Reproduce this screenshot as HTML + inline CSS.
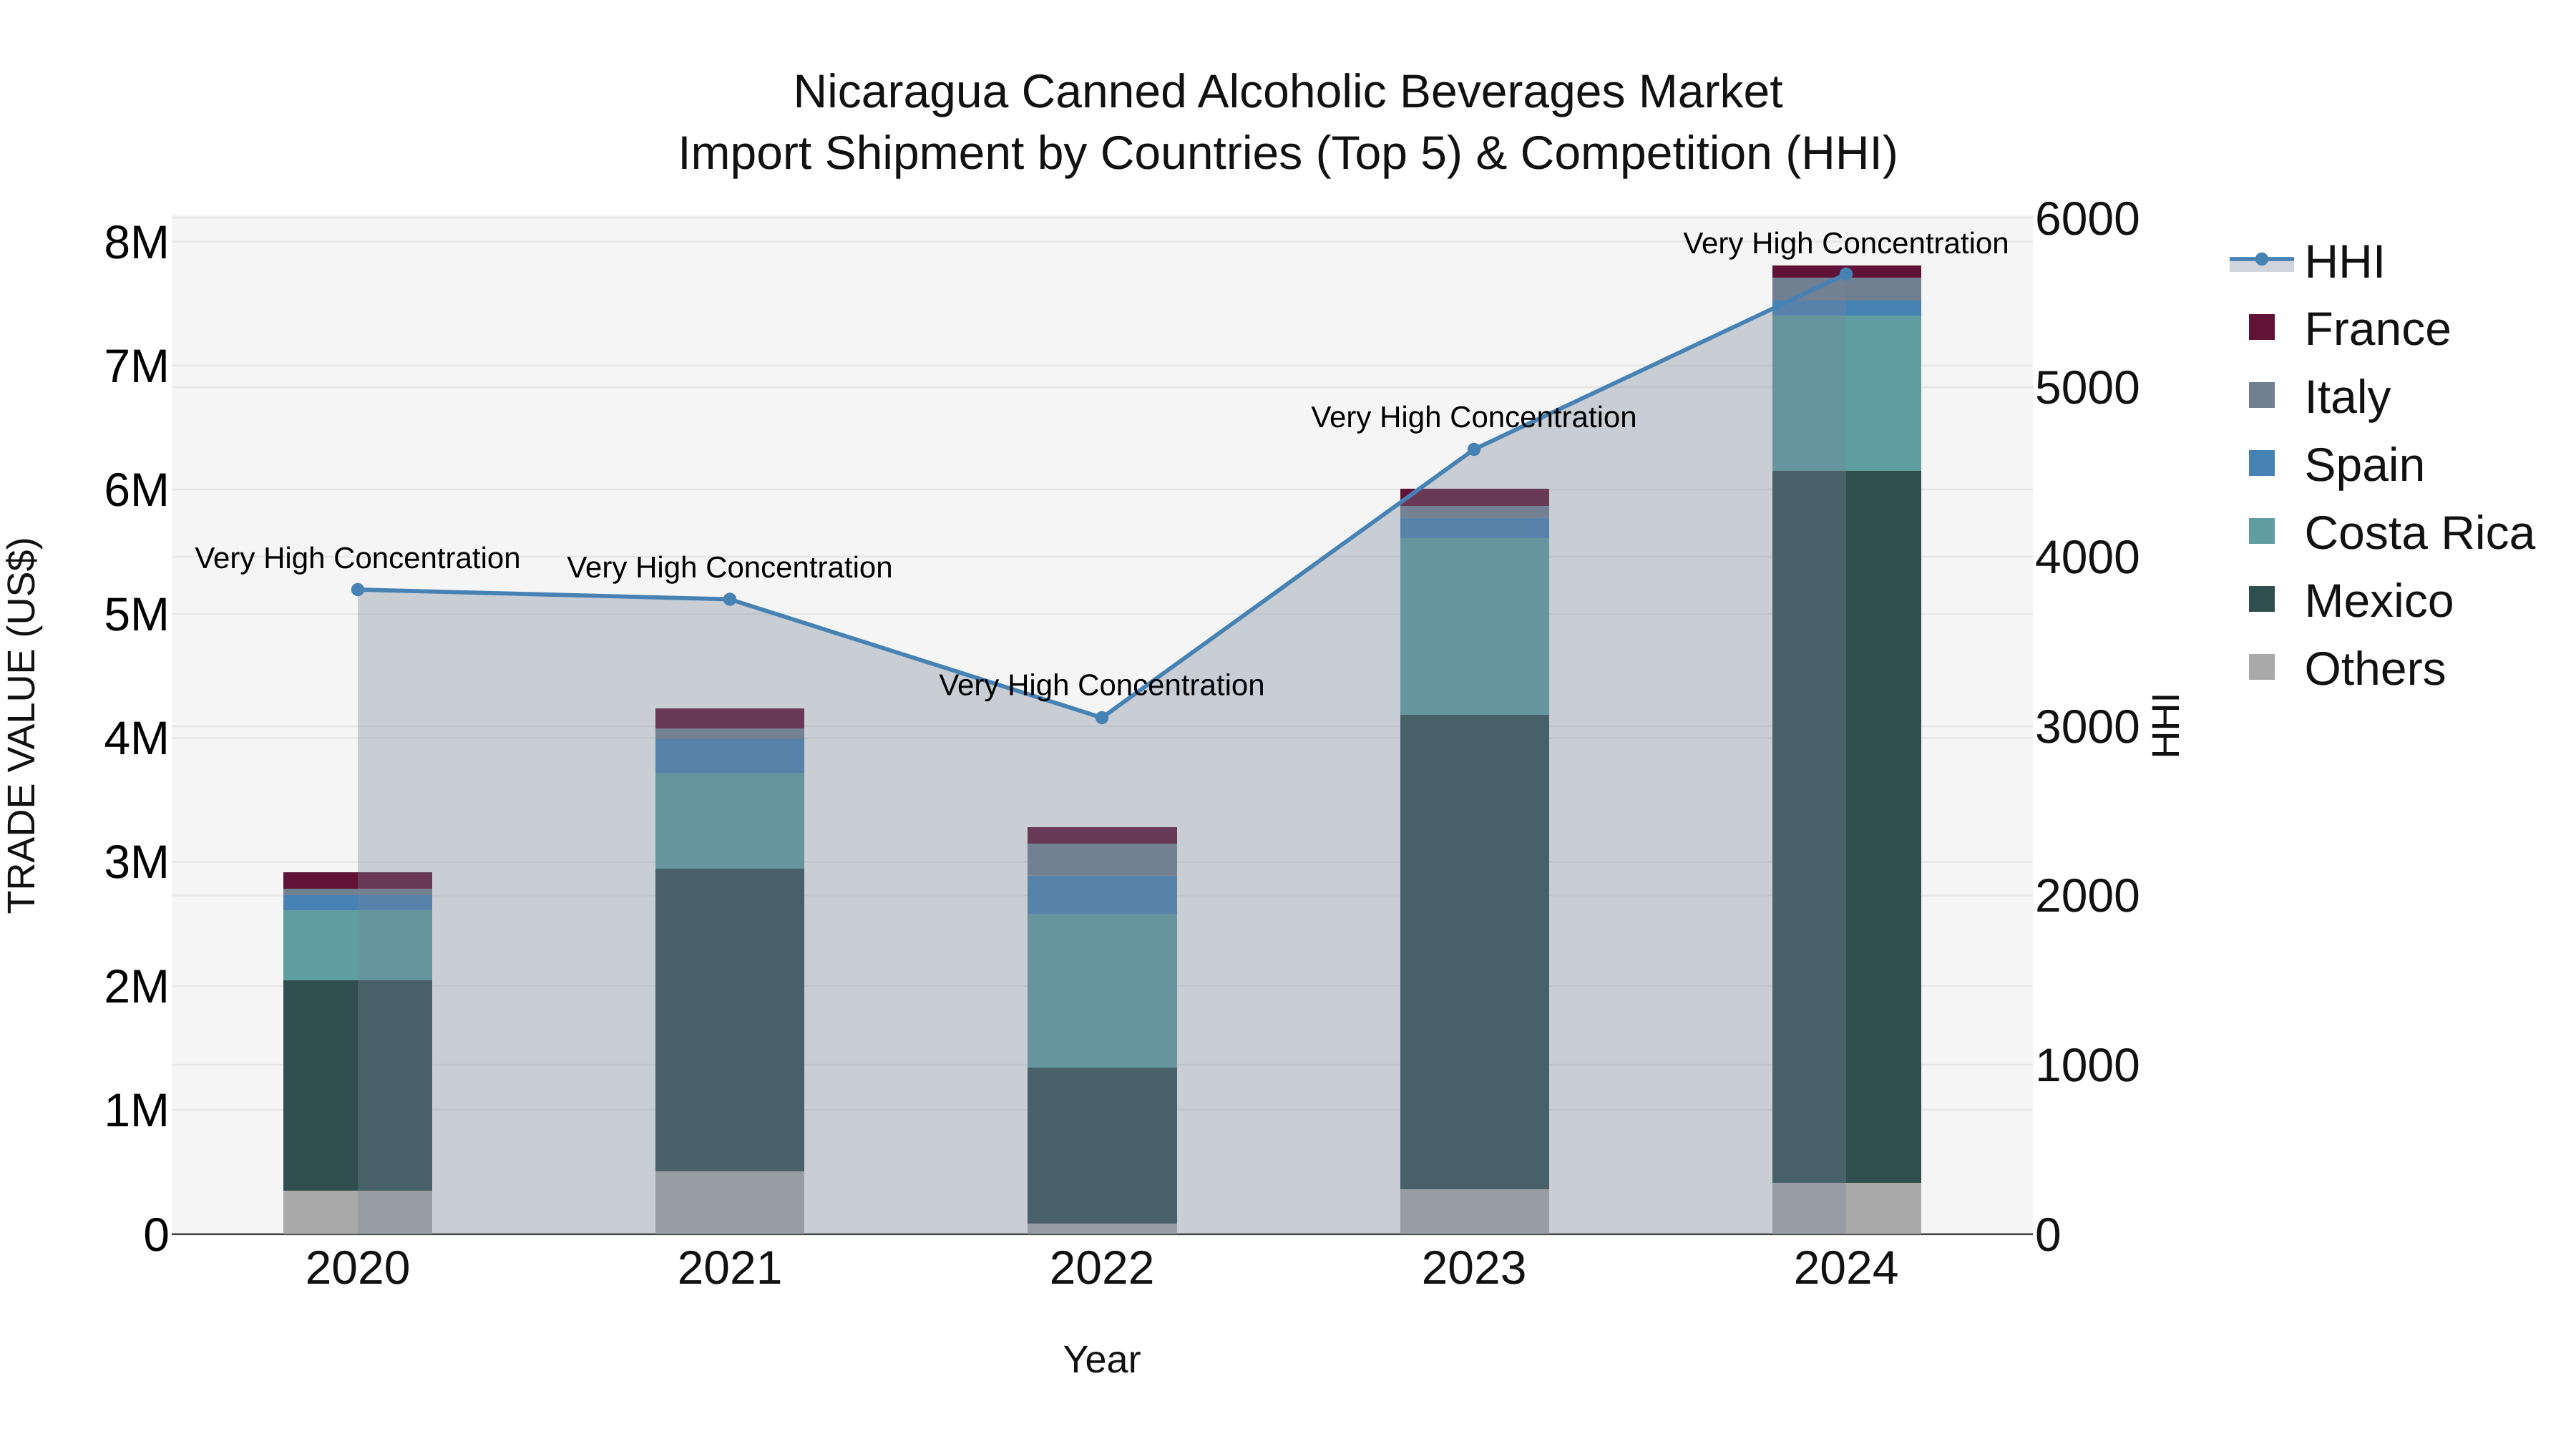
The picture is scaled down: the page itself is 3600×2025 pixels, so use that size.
<!DOCTYPE html>
<html>
<head>
<meta charset="utf-8">
<style>
html,body{margin:0;padding:0;background:#fff;width:3600px;height:2025px;overflow:hidden}
svg{display:block}
text{font-family:"Liberation Sans",Arial,sans-serif;text-rendering:geometricPrecision}
</style>
</head>
<body>
<svg width="3600" height="2025" viewBox="0 0 3600 2025" xmlns="http://www.w3.org/2000/svg">
<rect width="3600" height="2025" fill="#fff"/>
<rect x="240" y="300" width="2601" height="1424.5" fill="#f5f5f5"/>
<g stroke="#e6e6e6" stroke-width="2.6" fill="none">
<path d="M240 304H2841M240 337.5H2841M240 511H2841M240 541H2841M240 684H2841M240 778H2841M240 858H2841M240 1015H2841M240 1031.5H2841M240 1204.5H2841M240 1251.5H2841M240 1378H2841M240 1488H2841M240 1551H2841"/>
</g>
<path d="M240 1724.8H2841" stroke="#444" stroke-width="2.6" fill="none"/>
<!-- 2020 -->
<rect x="396" y="1664" width="208" height="60.5" fill="#a9a9a9"/>
<rect x="396" y="1370" width="208" height="294" fill="#2f4f4f"/>
<rect x="396" y="1272" width="208" height="98" fill="#5f9ea0"/>
<rect x="396" y="1251" width="208" height="21" fill="#4682b4"/>
<rect x="396" y="1242" width="208" height="9" fill="#708090"/>
<rect x="396" y="1219" width="208" height="23" fill="#601336"/>
<!-- 2021 -->
<rect x="916" y="1637" width="208" height="87.5" fill="#a9a9a9"/>
<rect x="916" y="1214" width="208" height="423" fill="#2f4f4f"/>
<rect x="916" y="1080" width="208" height="134" fill="#5f9ea0"/>
<rect x="916" y="1033" width="208" height="47" fill="#4682b4"/>
<rect x="916" y="1018" width="208" height="15" fill="#708090"/>
<rect x="916" y="990" width="208" height="28" fill="#601336"/>
<!-- 2022 -->
<rect x="1436" y="1710" width="209" height="14.5" fill="#a9a9a9"/>
<rect x="1436" y="1492" width="209" height="218" fill="#2f4f4f"/>
<rect x="1436" y="1277.7" width="209" height="214.3" fill="#5f9ea0"/>
<rect x="1436" y="1223.7" width="209" height="54" fill="#4682b4"/>
<rect x="1436" y="1179" width="209" height="44.7" fill="#708090"/>
<rect x="1436" y="1156" width="209" height="23" fill="#601336"/>
<!-- 2023 -->
<rect x="1957" y="1662" width="208" height="62.5" fill="#a9a9a9"/>
<rect x="1957" y="999" width="208" height="663" fill="#2f4f4f"/>
<rect x="1957" y="752" width="208" height="247" fill="#5f9ea0"/>
<rect x="1957" y="723.7" width="208" height="28.3" fill="#4682b4"/>
<rect x="1957" y="707" width="208" height="16.7" fill="#708090"/>
<rect x="1957" y="683" width="208" height="24" fill="#601336"/>
<!-- 2024 -->
<rect x="2477" y="1653" width="208" height="71.5" fill="#a9a9a9"/>
<rect x="2477" y="658" width="208" height="995" fill="#2f4f4f"/>
<rect x="2477" y="441" width="208" height="217" fill="#5f9ea0"/>
<rect x="2477" y="420" width="208" height="21" fill="#4682b4"/>
<rect x="2477" y="388" width="208" height="32" fill="#708090"/>
<rect x="2477" y="371" width="208" height="17" fill="#601336"/>
<!-- HHI area -->
<path d="M500 824L1020 837.5L1540 1003L2060 628L2580 383V1724.5H500Z" fill="rgb(120,132,153)" fill-opacity="0.35"/>
<path d="M500 824L1020 837.5L1540 1003L2060 628L2580 383" fill="none" stroke="#4682b4" stroke-width="5.8" stroke-linejoin="round"/>
<g fill="#4682b4">
<circle cx="500" cy="824" r="9.2"/>
<circle cx="1020" cy="837.5" r="9.2"/>
<circle cx="1540" cy="1003" r="9.2"/>
<circle cx="2060" cy="628" r="9.2"/>
<circle cx="2580" cy="383" r="9.2"/>
</g>
<!-- annotations -->
<g font-size="42" fill="#000" text-anchor="middle">
<text x="500" y="794">Very High Concentration</text>
<text x="1020" y="807">Very High Concentration</text>
<text x="1540" y="971.5">Very High Concentration</text>
<text x="2060" y="597">Very High Concentration</text>
<text x="2580" y="354">Very High Concentration</text>
</g>
<!-- title -->
<g font-size="66" fill="#111" text-anchor="middle">
<text x="1800" y="150">Nicaragua Canned Alcoholic Beverages Market</text>
<text x="1800" y="236">Import Shipment by Countries (Top 5) &amp; Competition (HHI)</text>
</g>
<!-- left ticks -->
<g font-size="66" fill="#000" text-anchor="end">
<text x="237" y="361">8M</text>
<text x="237" y="534">7M</text>
<text x="237" y="707">6M</text>
<text x="237" y="881">5M</text>
<text x="237" y="1054">4M</text>
<text x="237" y="1227">3M</text>
<text x="237" y="1401">2M</text>
<text x="237" y="1574">1M</text>
<text x="237" y="1748">0</text>
</g>
<!-- right ticks -->
<g font-size="66" fill="#111">
<text x="2844" y="328">6000</text>
<text x="2844" y="564">5000</text>
<text x="2844" y="801">4000</text>
<text x="2844" y="1038">3000</text>
<text x="2844" y="1274">2000</text>
<text x="2844" y="1511">1000</text>
<text x="2844" y="1748">0</text>
</g>
<!-- x ticks -->
<g font-size="66" fill="#111" text-anchor="middle">
<text x="500" y="1794">2020</text>
<text x="1020" y="1794">2021</text>
<text x="1540" y="1794">2022</text>
<text x="2060" y="1794">2023</text>
<text x="2580" y="1794">2024</text>
</g>
<!-- axis titles -->
<text x="1540" y="1918" font-size="54" fill="#111" text-anchor="middle">Year</text>
<text transform="translate(48,1014) rotate(-90)" font-size="54" fill="#111" text-anchor="middle">TRADE VALUE (US$)</text>
<text transform="translate(3045,1014) rotate(-90)" font-size="54" fill="#111" text-anchor="middle">HHI</text>
<!-- legend -->
<rect x="3116" y="362" width="90" height="18" fill="rgb(120,132,153)" fill-opacity="0.35"/>
<path d="M3116 362H3206" stroke="#4682b4" stroke-width="5.8" fill="none"/>
<circle cx="3161" cy="362" r="9.2" fill="#4682b4"/>
<rect x="3143" y="439" width="36" height="36" fill="#601336"/>
<rect x="3143" y="534" width="36" height="36" fill="#708090"/>
<rect x="3143" y="629" width="36" height="36" fill="#4682b4"/>
<rect x="3143" y="724" width="36" height="36" fill="#5f9ea0"/>
<rect x="3143" y="819" width="36" height="36" fill="#2f4f4f"/>
<rect x="3143" y="914" width="36" height="36" fill="#a9a9a9"/>
<g font-size="66" fill="#111">
<text x="3220.5" y="388">HHI</text>
<text x="3220.5" y="482">France</text>
<text x="3220.5" y="577">Italy</text>
<text x="3220.5" y="672">Spain</text>
<text x="3220.5" y="767">Costa Rica</text>
<text x="3220.5" y="862">Mexico</text>
<text x="3220.5" y="957">Others</text>
</g>
</svg>
</body>
</html>
